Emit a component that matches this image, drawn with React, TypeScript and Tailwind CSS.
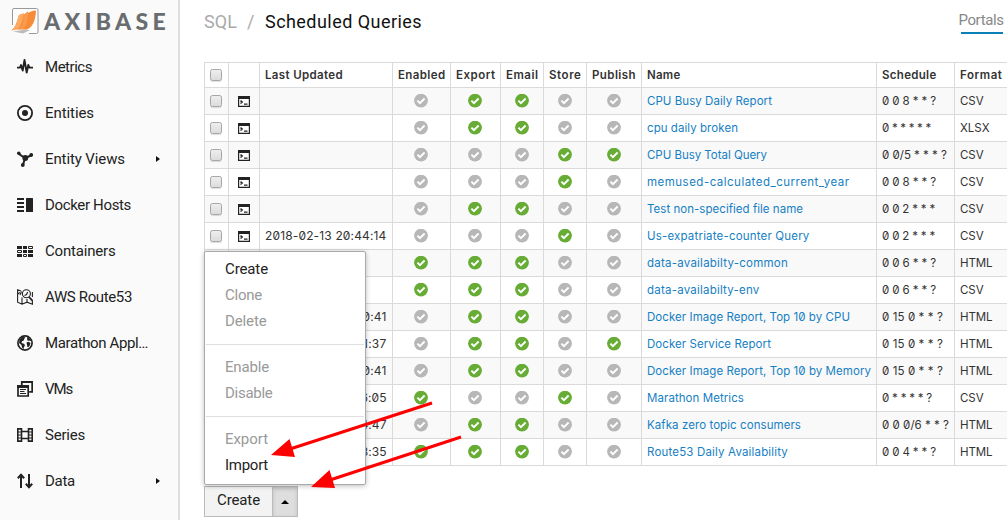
import { ReactNode, useLayoutEffect, useRef } from "react";

/** Single line of text tracked so that it occupies exactly `w` pixels. */
function Fit({ w, children, className = "" }: { w: number; children: string; className?: string }) {
  const ref = useRef<HTMLSpanElement>(null);
  useLayoutEffect(() => {
    const el = ref.current;
    if (!el) return;
    el.style.letterSpacing = "0px";
    const natural = el.getBoundingClientRect().width;
    el.style.letterSpacing = `${(w - natural) / children.length}px`;
  }, [w, children]);
  return (
    <span ref={ref} className={`inline-block whitespace-pre ${className}`}>
      {children}
    </span>
  );
}

function Icon({ children }: { children: ReactNode }) {
  return (
    <svg width="16" height="16" viewBox="0 0 16 16" fill="none" stroke="#222" className="shrink-0">
      {children}
    </svg>
  );
}

const icons: Record<string, ReactNode> = {
  Metrics: <path d="M0 8.600h3l1-2.500 1.700 5.400L7.500 1l2.200 12.500L11.300 6l1.200 2.600H16" strokeWidth="1.900" strokeLinejoin="round" />,
  Entities: (
    <>
      <circle cx="8" cy="8" r="7.1" strokeWidth="1.8" />
      <circle cx="8" cy="8" r="3" fill="#222" stroke="none" />
    </>
  ),
  "Entity Views": (
    <>
      <path d="M2 3l6 4 6-2.500M8 7l-2 7" strokeWidth="2" />
      <g fill="#222" stroke="none">
        <circle cx="1.8" cy="2.3" r="1.8" />
        <circle cx="14.2" cy="4" r="1.9" />
        <circle cx="5.8" cy="14" r="1.9" />
        <circle cx="8.3" cy="7" r="2.9" />
      </g>
    </>
  ),
  "Docker Hosts": (
    <g fill="#222" stroke="none">
      <path d="M0 1h7v2H0zM0 5h7v2H0zM0 9h7v2H0zM0 13h7v2H0z" />
      <rect x="9" y="1" width="7" height="14" rx=".5" />
    </g>
  ),
  Containers: (
    <>
      <path d="M0 3h5v3H0zM6 3h4v3H6zM6 7h4v3H6zM11 7h5v3h-5zM0 11h5v3H0zM11 11h5v3h-5z" fill="#222" stroke="none" />
      <path d="M11.500 3.500h4v2h-4zM.5 7.500h4v2h-4zM6.500 11.500h3v2h-3z" />
    </>
  ),
  "AWS Route53": (
    <g strokeWidth="1.1">
      <path d="M4 2L.6 .8v12.400L5 15.200l5-2 5.400 2V12M5 8.500v6.700M10 10v3.200M.8 5l2-1.500M15.400 3v5" />
      <circle cx="9.4" cy="4.8" r="4" />
      <path d="M12 8l3.600 4" strokeWidth="1.8" />
      <path d="M7.500 6.500l2-1 1.200-2.500M4.500 2.500L3 6" />
    </g>
  ),
  "Marathon Appl…": (
    <>
      <circle cx="8" cy="8" r="7.1" strokeWidth="1.7" />
      <path
        d="M2.500 4.500L5.500 2l3 .3L7.200 4l-.5 1.500-1.700.8L4.500 8l2.500.8 1 1.500-1 1.700-.5 2L5 12.500 4.500 10 2 8zM10 1.800l3.500 2.500.7 2-2-.8-1.500.5-.5-1.500zM9.500 7.500l2-.8 2 1.300-.8 2.500-1.400 1.800-1-.5-.3-2z"
        fill="#222"
        stroke="none"
      />
    </>
  ),
  VMs: (
    <>
      <path d="M4.800 4V1h10.400v9.800h-3" strokeWidth="1.8" />
      <path d="M1 5.200h10.200V15H1z" strokeWidth="1.7" />
      <path d="M0 4h12v3H0z" fill="#222" stroke="none" />
      <path d="M3 8.500h6M3 10.500h4.500M3 12.500h6" />
    </>
  ),
  Series: (
    <>
      <path d="M.8 1.900h3.700v12.200H.8zM11.500 1.900h3.700v12.200h-3.700zM4.500 4.500h7M4.500 11.500h7" strokeWidth="1.6" />
      <path d="M1 5h3M1 8h3M1 11h3M12 5h3M12 8h3M12 11h3" strokeWidth="1.2" />
    </>
  ),
  Data: <path d="M4 15V2M.8 5.200L4 1.800l3.200 3.400M12 1v13M8.800 10.800L12 14.200l3.200-3.400" strokeWidth="2" />,
};

const nav: [string, number, boolean?][] = [
  ["Metrics", 47],
  ["Entities", 49],
  ["Entity Views", 80, true],
  ["Docker Hosts", 86],
  ["Containers", 70.5],
  ["AWS Route53", 87],
  ["Marathon Appl…", 103],
  ["VMs", 27],
  ["Series", 40],
  ["Data", 30, true],
];

function Logo() {
  return (
    <div className="flex h-[44px] items-start pl-[11px] pt-[8px]">
      <svg width="28" height="27" viewBox="0 0 28 27" className="shrink-0">
        <path d="M1.500 17V2q0-1.500 1.500-1.500h22.500q1.500 0 1.500 1.500v22q0 1.500-1.500 1.500H18" fill="#fdfdfd" stroke="#999" />
        <path d="M2 23.500l13-2 4 .5-7 3.500z" fill="#bcbcbc" />
        <path d="M0 22.500C4.500 20.500 6 13 8 7l4.500-1.800V7l4.500-3.500V5c2.500-1.500 5-2.200 8-2.500-.3 8.500-3 18-10 19-5 .5-10-1-15 1z" fill="#f68b38" />
        <path d="M0 22.500C4.500 20.500 6 13 8 7l4.500-1.800C12 12 9.500 20 6 21.300z" fill="#ffa963" />
        <path d="M8 21c3.500-2.500 4.500-8 4.500-14L17 3.500C17 12 15.500 19 12 21.200z" fill="#fd9a4a" />
      </svg>
      <Fit w={126} className="ml-[5px] mt-[2px] font-['Lato'] text-[23px] leading-[23px] font-black text-[#696d70]">
        AXIBASE
      </Fit>
    </div>
  );
}

function Check({ on }: { on: boolean }) {
  return (
    <svg width="15" height="14" viewBox="0 0 15 14" className="mx-auto">
      <circle cx="7" cy="6.600" r="6.900" fill={on ? "#67ad35" : "#b7b7b7"} />
      <path d="M3.400 6.700l2.500 2.500 4.700-4.700" fill="none" stroke="#fff" strokeWidth="1.900" />
    </svg>
  );
}

function Box() {
  return (
    <span className="ml-[5px] block size-[12px] rounded-[2.5px] border border-[#a6a6a6] bg-linear-to-b from-[#eee] to-[#dcdcdc] shadow-[0_1px_1px_#0002]" />
  );
}

function Terminal() {
  return (
    <svg width="12" height="11" viewBox="0 0 12 11" className="mx-auto">
      <path d="M.6.6h10.800v9.800H.6z" fill="#fff" stroke="#222" strokeWidth="1.200" />
      <path d="M0 0h12v3H0z" fill="#222" />
      <path d="M2.500 4.600l1.700 1.400-1.700 1.500M6 8.100h3.500" fill="none" stroke="#222" strokeWidth="1.400" />
    </svg>
  );
}

const heads: [string, number][] = [
  ["Last Updated", 78],
  ["Enabled", 47.5],
  ["Export", 39.5],
  ["Email", 32.5],
  ["Store", 32.5],
  ["Publish", 44],
  ["Name", 33.5],
  ["Schedule", 54.5],
  ["Format", 42.5],
];

type Row = { date: string; flags: string; name: string; w: number; cron: string; cw: number; format: string };
const rows: Row[] = [
  { date: "", flags: "01100", name: "CPU Busy Daily Report", w: 125, cron: "0 0 8 * * ?", cw: 54, format: "CSV" },
  { date: "", flags: "01100", name: "cpu daily broken", w: 91, cron: "0 * * * * *", cw: 49, format: "XLSX" },
  { date: "", flags: "00011", name: "CPU Busy Total Query", w: 120, cron: "0 0/5 * * * ?", cw: 65, format: "CSV" },
  { date: "", flags: "00010", name: "memused-calculated_current_year", w: 202.5, cron: "0 0 8 * * ?", cw: 54, format: "CSV" },
  { date: "", flags: "01100", name: "Test non-specified file name", w: 156, cron: "0 0 2 * * *", cw: 53, format: "CSV" },
  { date: "2018-02-13 20:44:14", flags: "00010", name: "Us-expatriate-counter Query", w: 162.5, cron: "0 0 2 * * *", cw: 53, format: "CSV" },
  { date: "", flags: "11100", name: "data-availabilty-common", w: 141, cron: "0 0 6 * * ?", cw: 54, format: "HTML" },
  { date: "", flags: "11100", name: "data-availabilty-env", w: 112.5, cron: "0 0 6 * * ?", cw: 54, format: "CSV" },
  { date: "2018-02-13 20:40:41", flags: "01100", name: "Docker Image Report, Top 10 by CPU", w: 203, cron: "0 15 0 * * ?", cw: 61, format: "HTML" },
  { date: "2018-02-13 20:41:37", flags: "01101", name: "Docker Service Report", w: 124, cron: "0 15 0 * * ?", cw: 61, format: "HTML" },
  { date: "2018-02-13 20:40:41", flags: "01100", name: "Docker Image Report, Top 10 by Memory", w: 224, cron: "0 15 0 * * ?", cw: 61, format: "HTML" },
  { date: "2018-02-13 20:46:05", flags: "10010", name: "Marathon Metrics", w: 97, cron: "0 * * * * ?", cw: 50, format: "CSV" },
  { date: "2018-02-13 20:44:47", flags: "01100", name: "Kafka zero topic consumers", w: 154, cron: "0 0 0/6 * * ?", cw: 67, format: "HTML" },
  { date: "2018-02-13 20:43:35", flags: "11100", name: "Route53 Daily Availability", w: 141, cron: "0 0 4 * * ?", cw: 54, format: "HTML" },
];
const formatWidth: Record<string, number> = { CSV: 23.5, XLSX: 29.5, HTML: 32.5 };

function QueryTable() {
  const cell = "border border-[#dadada] p-0 overflow-hidden";
  return (
    <table className="w-[821px] table-fixed border-collapse font-['Inter'] text-[11.5px] leading-[14px] text-[#333] [font-feature-settings:'zero']">
      <colgroup>
        <col className="w-[24px]" />
        <col className="w-[31px]" />
        <col className="w-[133px]" />
        <col className="w-[58px]" />
        <col className="w-[50px]" />
        <col className="w-[43px]" />
        <col className="w-[43px]" />
        <col className="w-[55px]" />
        <col className="w-[235px]" />
        <col className="w-[78px]" />
        <col className="w-[70px]" />
      </colgroup>
      <thead>
        <tr className="h-[25px]">
          <th className={cell}><Box /></th>
          <th className={cell} />
          {heads.map(([t, w]) => (
            <th key={t} className={`${cell} pl-[5px] text-left font-semibold`}>
              <Fit w={w} className="align-top">{t}</Fit>
            </th>
          ))}
        </tr>
      </thead>
      <tbody>
        {rows.map((r) => (
          <tr key={r.name} className="h-[27px] odd:bg-[#f9f9f9]">
            <td className={cell}><Box /></td>
            <td className={cell}><Terminal /></td>
            <td className={`${cell} pl-[5px]`}>{r.date && <Fit w={121.5} className="align-top text-[12px]">{r.date}</Fit>}</td>
            {r.flags.split("").map((f, i) => (
              <td key={i} className={cell}><Check on={f === "1"} /></td>
            ))}
            <td className={`${cell} pl-[5px] text-[#1680c4]`}><Fit w={r.w} className="align-top">{r.name}</Fit></td>
            <td className={`${cell} pl-[5px]`}><Fit w={r.cw} className="align-top">{r.cron}</Fit></td>
            <td className={`${cell} pl-[5px]`}><Fit w={formatWidth[r.format]} className="align-top">{r.format}</Fit></td>
          </tr>
        ))}
      </tbody>
    </table>
  );
}

const menu: [string, number, boolean][][] = [
  [["Create", 43, true], ["Clone", 37, false], ["Delete", 41.5, false]],
  [["Enable", 44, false], ["Disable", 47.5, false]],
  [["Export", 43, false], ["Import", 43, true]],
];

function Menu() {
  return (
    <div className="absolute left-[204px] top-[251px] h-[234px] w-[162px] rounded-[2px] border border-[#aaa] bg-white px-px pt-[4px] shadow-[0_1px_5px_#0004]">
      {menu.map((group, i) => (
        <div key={i} className={i ? "mt-[10px] border-t border-[#e0e0e0] pt-[9px]" : ""}>
          {group.map(([t, w, on]) => (
            <div key={t} className={`flex h-[26px] items-center pl-[19px] text-[15px] leading-[18px] ${on ? "text-[#222]" : "text-[#999]"}`}>
              <Fit w={w}>{t}</Fit>
            </div>
          ))}
        </div>
      ))}
    </div>
  );
}

export default function App() {
  return (
    <div className="relative flex h-[520px] w-[1007px] overflow-hidden bg-white font-['Roboto',sans-serif]">
      <aside className="w-[180px] shrink-0 border-r-2 border-[#dedede] bg-[#fafafa]">
        <Logo />
        <nav>
          {nav.map(([t, w, more]) => (
            <div key={t} className="flex h-[46px] items-center gap-[12px] pl-[17px] text-[15px] text-[#222]">
              <Icon>{icons[t]}</Icon>
              <Fit w={w}>{t}</Fit>
              {more && (
                <svg width="4" height="6" viewBox="0 0 4 6" className="mr-[18px] ml-auto">
                  <path d="M0 0l4 3-4 3z" fill="#111" />
                </svg>
              )}
            </div>
          ))}
        </nav>
      </aside>
      <main className="w-[827px] shrink-0 pl-[24px]">
        <header className="flex h-[62px] items-start pt-[10px] text-[18px] leading-[24px] text-[#aaa]">
          <Fit w={33}>SQL</Fit>
          <Fit w={8} className="ml-[10px]">/</Fit>
          <Fit w={157} className="ml-[10px] text-[#111]">Scheduled Queries</Fit>
          <span className="mr-[4px] ml-auto flex h-[24px] w-[42px] flex-col items-center border-b-2 border-[#0a80b7] text-[15px] leading-[20px] text-[#888]">
            <Fit w={45} className="-ml-[2px]">Portals</Fit>
          </span>
        </header>
        <QueryTable />
        <div className="mt-[20px] flex h-[31px] w-[94px] border border-[#bbb] bg-[#f3f3f3] text-[15px] text-[#222]">
          <span className="flex w-[67px] items-center pb-[2px] pl-[12px]"><Fit w={43}>Create</Fit></span>
          <span className="flex flex-1 items-center justify-center border-l border-[#bbb] bg-[#dedede] shadow-[inset_0_2px_4px_#0002]">
            <svg width="8" height="4" viewBox="0 0 8 4"><path d="M0 4l4-4 4 4z" fill="#000" /></svg>
          </span>
        </div>
      </main>
      <Menu />
      <svg width="1007" height="520" viewBox="0 0 1007 520" className="pointer-events-none absolute inset-0">
        <path d="M432 403L290 449M461 437L330 480" stroke="#f00" strokeWidth="3" />
        <path d="M271 455l18.500-16 5.500 18zM311 487l18.500-17 5.500 18z" fill="#f00" />
      </svg>
    </div>
  );
}
